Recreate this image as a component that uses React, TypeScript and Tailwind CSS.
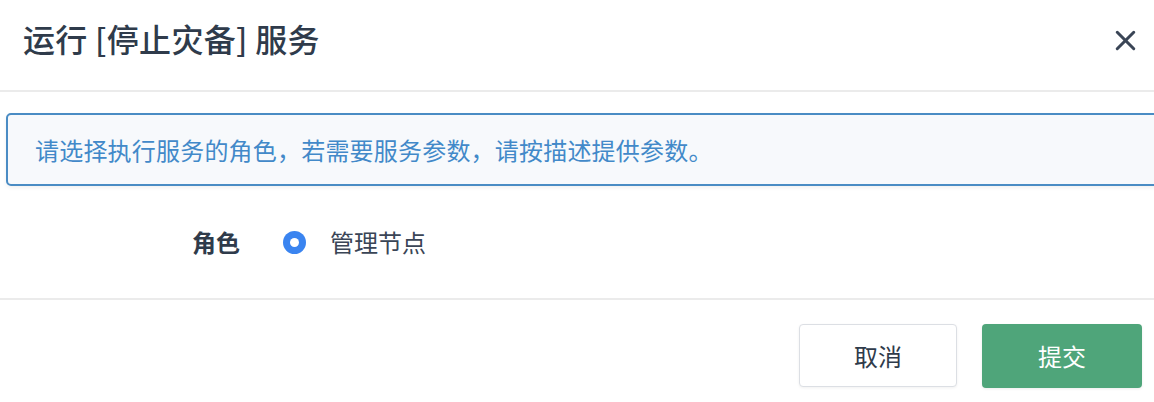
import { X } from 'lucide-react'

const font = '"Noto Sans CJK SC", "Noto Sans", sans-serif'

export default function App() {
  return (
    <div className="w-[1154px] h-[402px] bg-white overflow-hidden" style={{ fontFamily: font }}>
      {/* header */}
      <div className="h-[92px] flex items-start justify-between border-b-2 border-[#ebebeb] pl-[23px] pr-[12px] pt-[16px]">
        <h1 className="text-[32px] leading-[44px] text-[#2f3b4b] font-medium tracking-[0.3px]">运行 [停止灾备] 服务</h1>
        <button className="mt-[8px] text-[#3a4556]">
          <X size={33} strokeWidth={2.2} />
        </button>
      </div>

      {/* body */}
      <div className="pt-[21px]">
        <div className="ml-[6px] w-[1160px] h-[73px] flex items-center pl-[27px] rounded-l-[5px] border-2 border-[#4a8cc4] bg-[#f7f9fc] shadow-[0_2px_4px_rgba(0,0,0,0.06)]">
          <p className="text-[24px] text-[#4289c9] tracking-[0.2px]">请选择执行服务的角色，若需要服务参数，请按描述提供参数。</p>
        </div>

        <div className="h-[112px] flex items-center">
          <span className="ml-[192px] w-[91px] text-[24px] font-bold text-[#2f3b4b]">角色</span>
          <span className="w-[23px] h-[23px] rounded-full bg-[#3a84f0] flex items-center justify-center">
            <span className="w-[9px] h-[9px] rounded-full bg-white" />
          </span>
          <span className="ml-[24px] text-[24px] text-[#3a4556]">管理节点</span>
        </div>
      </div>

      {/* footer */}
      <div className="border-t-2 border-[#ebebeb] flex justify-end gap-[25px] pt-[24px] pr-[12px]">
        <button className="w-[158px] h-[63px] rounded-[4px] border border-[#dcdfe4] bg-white text-[24px] text-[#2f3b4b] shadow-[0_1px_3px_rgba(0,0,0,0.06)]">
          取消
        </button>
        <button className="w-[160px] h-[64px] rounded-[4px] bg-[#4fa57a] text-[24px] text-white shadow-[0_1px_3px_rgba(0,0,0,0.08)]">
          提交
        </button>
      </div>
    </div>
  )
}
